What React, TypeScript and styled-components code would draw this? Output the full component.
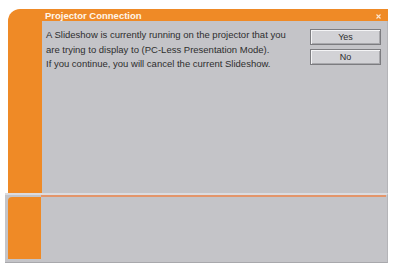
import React from "react";
import styled, { createGlobalStyle } from "styled-components";

const Global = createGlobalStyle`
  html, body { margin: 0; padding: 0; background: #ffffff; }
  body { font-family: "Liberation Sans", Arial, sans-serif; }
`;

const ORANGE = "#ef8a26";
const GRAY = "#c4c4c8";

const Window = styled.div`
  margin: 9px 0 0 5px;
  width: 383px;
  display: flex;
  flex-direction: column;
`;

const TopSection = styled.div`
  margin-left: 3px;
  height: 184px;
  background: ${ORANGE};
  border-top-left-radius: 12px;
  display: grid;
  grid-template-columns: 34px 1fr;
  grid-template-rows: 12px 1fr;
`;

const TitleBar = styled.div`
  grid-column: 2;
  grid-row: 1;
  display: flex;
  align-items: center;
  justify-content: space-between;
  padding: 0 5px 0 3px;
  margin-right: 2px;
`;

const Title = styled.span`
  color: #fff6ea;
  font-weight: bold;
  font-size: 9.5px;
  line-height: 12px;
  margin-top: 2px;
`;

const CloseIcon = styled.svg`
  width: 5px;
  height: 5px;
  margin-top: 2px;
`;

const Panel = styled.div`
  grid-column: 2;
  grid-row: 2;
  background: ${GRAY};
  border-right: 1px solid #b4b4b8;
  display: flex;
  align-items: flex-start;
`;

const Message = styled.div`
  flex: 1;
  padding: 7px 0 0 4px;
  color: #2e2e2e;
  font-size: 9.5px;
  line-height: 14.5px;
`;

const Buttons = styled.div`
  width: 71px;
  margin: 8px 6px 0 0;
  display: flex;
  flex-direction: column;
  gap: 4px;
`;

const Button = styled.button`
  height: 16px;
  padding: 0;
  background: #d2d2d6;
  border: 1px solid #7c7c80;
  box-shadow: inset 1px 1px 0 #f4f4f6, inset -1px -1px 0 #a8a8ac;
  font-family: "Liberation Sans", Arial, sans-serif;
  font-size: 9px;
  color: #2e2e2e;
  cursor: pointer;
`;

const BottomSection = styled.div`
  height: 67px;
  background: ${GRAY};
  border-top: 2px solid #dcdce0;
  border-bottom: 1px solid #a8a8ac;
  border-right: 1px solid #b4b4b8;
  display: flex;
`;

const SideBlock = styled.div`
  width: 33px;
  margin: 2px 0 3px 3px;
  background: ${ORANGE};
  border-top-left-radius: 4px;
`;

const Footer = styled.div`
  flex: 1;
  border-top: 2px solid #e3956a;
  margin-right: 1px;
`;

export default function App() {
  return (
    <>
      <Global />
      <Window>
        <TopSection>
          <TitleBar>
            <Title>Projector Connection</Title>
            <CloseIcon viewBox="0 0 5 5">
              <path d="M0.5 0.5 L4.5 4.5 M4.5 0.5 L0.5 4.5" stroke="#fbe6d2" strokeWidth="1.1" />
            </CloseIcon>
          </TitleBar>
          <Panel>
            <Message>
              A Slideshow is currently running on the projector that you
              <br />
              are trying to display to (PC-Less Presentation Mode).
              <br />
              If you continue, you will cancel the current Slideshow.
            </Message>
            <Buttons>
              <Button>Yes</Button>
              <Button>No</Button>
            </Buttons>
          </Panel>
        </TopSection>
        <BottomSection>
          <SideBlock />
          <Footer />
        </BottomSection>
      </Window>
    </>
  );
}
